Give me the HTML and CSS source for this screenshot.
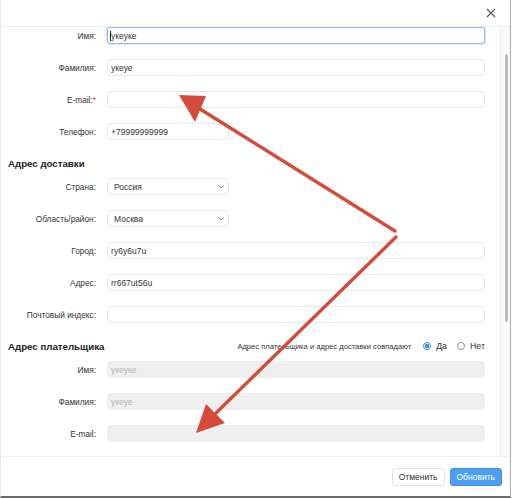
FILE: index.html
```html
<!DOCTYPE html>
<html>
<head>
<meta charset="UTF-8">
<title>Редактирование заказа</title>
<link rel="stylesheet" href="styles.css">
</head>
<body>
<div class="modal">
  <div class="modal-head">
    <span class="close"><svg width="10" height="10" viewBox="0 0 10 10"><path d="M1 1L9 9M9 1L1 9" stroke="#555" stroke-width="1.1" fill="none"/></svg></span>
  </div>

  <div class="modal-body">
    <div class="form">
      <div class="row"><label>Имя:</label><span class="field"><input class="inp focus" value="укеуке"><span class="caret"></span></span></div>
      <div class="row"><label>Фамилия:</label><input class="inp" value="укеуе"></div>
      <div class="row"><label>E-mail:<span class="req">*</span></label><input class="inp" value=""></div>
      <div class="row"><label>Телефон:</label><input class="inp short" value="+79999999999"></div>

      <div class="section"><h4>Адрес доставки</h4></div>
      <div class="row"><label>Страна:</label><div class="select short">Россия <svg width="6" height="4" viewBox="0 0 6 4"><path d="M0.5 0.5L3 3L5.5 0.5" stroke="#777" stroke-width="0.9" fill="none"/></svg></div></div>
      <div class="row"><label>Область/район:</label><div class="select short">Москва <svg width="6" height="4" viewBox="0 0 6 4"><path d="M0.5 0.5L3 3L5.5 0.5" stroke="#777" stroke-width="0.9" fill="none"/></svg></div></div>
      <div class="row"><label>Город:</label><input class="inp" value="гу6у6u7u"></div>
      <div class="row"><label>Адрес:</label><input class="inp" value="rr667ut56u"></div>
      <div class="row"><label>Почтовый индекс:</label><input class="inp" value=""></div>

      <div class="section between">
        <h4>Адрес плательщика</h4>
        <div class="same">
          <span class="same-text">Адрес плательщика и адрес доставки совпадают</span>
          <span class="radio on"></span><span class="opt">Да</span>
          <span class="radio"></span><span class="opt">Нет</span>
        </div>
      </div>
      <div class="row"><label>Имя:</label><input class="inp" value="укеуке" disabled></div>
      <div class="row"><label>Фамилия:</label><input class="inp" value="укеуе" disabled></div>
      <div class="row"><label>E-mail:</label><input class="inp" value="" disabled></div>
    </div>
    <div class="scrollbar"><div class="thumb"></div></div>
  </div>

  <div class="modal-foot">
    <a class="btn" href="#">Отменить</a>
    <a class="btn primary" href="#">Обновить</a>
  </div>

  <svg class="arrows" width="512" height="499" viewBox="0 0 512 499">
    <line x1="395" y1="231" x2="200" y2="109" stroke="#d44b3c" stroke-width="3.4" stroke-linecap="round"/>
    <polygon points="179,95 206,96 195,122" fill="#d44b3c"/>
    <line x1="396" y1="237" x2="214" y2="415" stroke="#d44b3c" stroke-width="3.4" stroke-linecap="round"/>
    <polygon points="196,433 206,404 225,423" fill="#d44b3c"/>
  </svg>
</div>
</body>
</html>
```

FILE: styles.css
```css
* { box-sizing: border-box; }
html, body { margin: 0; background: #fff; }
body { font-family: "Liberation Sans", Arial, sans-serif; font-size: 8.3px; color: #333; }

.modal { position: relative; width: 511px; height: 498px; border-left: 1px solid #e6e6e6; border-right: 1px solid #a9a9a9; border-bottom: 2px solid #6b6b6b; display: flex; flex-direction: column; }
.modal-head { height: 27px; flex: none; border-bottom: 1px solid #eceef2; display: flex; justify-content: flex-end; align-items: center; padding-right: 14px; }
.close { display: block; width: 10px; height: 10px; }
.close svg { display: block; }

.modal-body { flex: 1; display: flex; min-height: 0; overflow: hidden; }
.form { flex: 1; padding: 0 15px 0 0; }
.scrollbar { width: 10px; flex: none; border-left: 1px solid #efefef; background: #fafafa; }
.thumb { margin: 27px 0 0 4px; width: 3px; height: 268px; background: #bdbdbd; border-radius: 2px; }

.row { display: grid; grid-template-columns: 95px 1fr; column-gap: 11px; align-items: center; margin-bottom: 15px; height: 17px; }
.row label { text-align: right; white-space: nowrap; color: #333; }
.req { color: #e0453a; }

.inp { display: block; width: 100%; height: 17px; border: 1px solid #e7e9ef; border-radius: 3px; padding: 0 3px; font: inherit; font-size: 8.5px; color: #333; background: #fff; outline: none; }
.inp.short, .select.short { width: 122px; }
.inp:disabled { background: #efefef; border-color: #efefef; color: #b3b3b3; }
.inp.focus { border-color: #8fbaf0; box-shadow: 0 0 0 1px #dbe9fb; }
.field { position: relative; display: block; }
.caret { position: absolute; left: 3px; top: 4px; width: 1px; height: 10px; background: #222; }

.select { display: flex; justify-content: space-between; align-items: center; height: 17px; border: 1px solid #e7e9ef; border-radius: 3px; padding: 0 4px 0 6px; background: #fff; font-size: 8.5px; }
.select svg { display: block; }

.section { height: 16px; margin: 0 0 7px 0; padding-left: 7px; display: flex; align-items: center; }
.section h4 { margin: 0; font-size: 9.7px; font-weight: bold; color: #222; }
.between { justify-content: space-between; }
.same { display: flex; align-items: center; color: #333; }
.same-text { font-size: 7.6px; margin-right: 12px; }
.opt { font-size: 8.8px; margin-left: 5px; }
.radio { display: inline-block; width: 8px; height: 8px; border: 1px solid #8c8c8c; border-radius: 50%; margin-left: 10px; }
.radio.on { border-color: #3d8ce6; background: radial-gradient(circle, #3d8ce6 0 2px, #fff 2.5px); margin-left: 0; }

.modal-foot { height: 40px; flex: none; border-top: 1px solid #eef0f3; display: flex; justify-content: flex-end; align-items: center; gap: 5px; padding-right: 8px; }
.btn { display: block; height: 18px; line-height: 16px; padding: 0 6px; border: 1px solid #dfe3ea; border-radius: 3px; color: #333; text-decoration: none; font-size: 8.5px; background: #fff; }
.btn.primary { background: #4d9ef0; border-color: #3f91e4; color: #fff; }

.arrows { position: absolute; top: 0; left: -1px; pointer-events: none; }
```
